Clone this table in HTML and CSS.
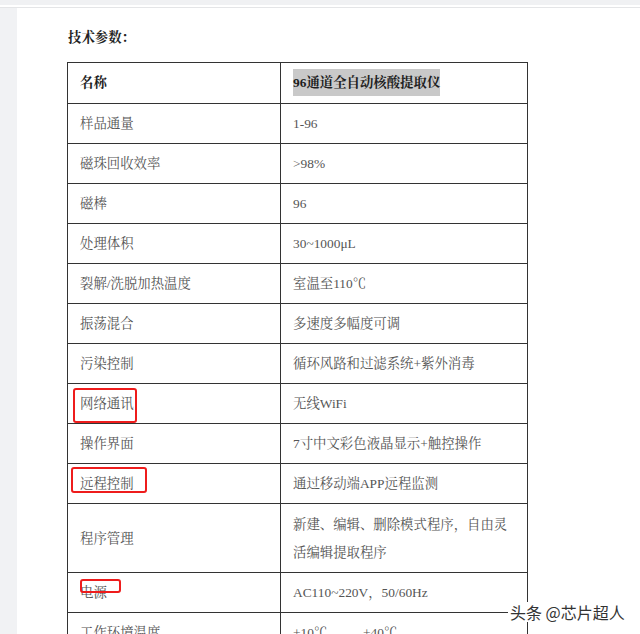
FILE: index.html
```html
<!DOCTYPE html>
<html lang="zh">
  <head>
    <meta charset="UTF-8" />
    <meta name="viewport" content="width=device-width, initial-scale=1.0" />
    <title>技术参数</title>
    <link rel="stylesheet" href="styles.css">
  </head>
  <body>
    <div class="topbar"></div>
    <div class="topgap"></div>
    <div class="workspace">
      <div class="gutter"></div>
      <div class="page">
        <h3 class="doc-title">技术参数：</h3>
        <table class="spec-table">
          <tr class="head">
            <td class="key">名称</td>
            <td class="val"><span class="hl">96通道全自动核酸提取仪</span></td>
          </tr>
          <tr>
            <td class="key">样品通量</td>
            <td class="val">1-96</td>
          </tr>
          <tr>
            <td class="key">磁珠回收效率</td>
            <td class="val">&gt;98%</td>
          </tr>
          <tr>
            <td class="key">磁棒</td>
            <td class="val">96</td>
          </tr>
          <tr>
            <td class="key">处理体积</td>
            <td class="val">30~1000μL</td>
          </tr>
          <tr>
            <td class="key">裂解/洗脱加热温度</td>
            <td class="val">室温至110℃</td>
          </tr>
          <tr>
            <td class="key">振荡混合</td>
            <td class="val">多速度多幅度可调</td>
          </tr>
          <tr>
            <td class="key">污染控制</td>
            <td class="val">循环风路和过滤系统+紫外消毒</td>
          </tr>
          <tr>
            <td class="key"><span class="mark mark-net"></span>网络通讯</td>
            <td class="val">无线WiFi</td>
          </tr>
          <tr>
            <td class="key">操作界面</td>
            <td class="val">7寸中文彩色液晶显示+触控操作</td>
          </tr>
          <tr>
            <td class="key"><span class="mark mark-remote"></span>远程控制</td>
            <td class="val">通过移动端APP远程监测</td>
          </tr>
          <tr class="tall">
            <td class="key">程序管理</td>
            <td class="val">新建、编辑、删除模式程序，自由灵活编辑提取程序</td>
          </tr>
          <tr>
            <td class="key"><span class="mark mark-power"></span>电源</td>
            <td class="val">AC110~220V，50/60Hz</td>
          </tr>
          <tr>
            <td class="key">工作环境温度</td>
            <td class="val">+10℃&nbsp;&nbsp;&nbsp;&nbsp;--&nbsp;&nbsp;&nbsp;&nbsp;+40℃</td>
          </tr>
        </table>
        <div class="watermark">头条 @芯片超人</div>
      </div>
    </div>
  </body>
</html>
```

FILE: styles.css
```css
body {
  margin: 0;
  background-color: #f1f2f4;
  font-family: "Liberation Serif", "Noto Serif CJK SC", "Noto Sans CJK SC", serif;
  overflow: hidden;
  height: 634px;
}
.topbar {
  height: 5px;
  background-color: #f0f1f3;
}
.topgap {
  height: 2px;
  background-color: #fff;
  border-bottom: 1px solid #e4e5e7;
}
.workspace {
  display: flex;
  height: 626px;
}
.gutter {
  width: 17px;
  flex-shrink: 0;
  background-color: #f1f2f4;
}
.page {
  position: relative;
  flex: 1;
  background-color: #fff;
  padding: 20px 0 0 50px;
}
.doc-title {
  margin: 0 0 14px 1px;
  font-size: 13.4px;
  line-height: 20px;
  font-weight: bold;
  color: #222;
}
.spec-table {
  border-collapse: collapse;
  width: 461px;
  font-size: 13.4px;
  color: #555;
}
.spec-table td {
  border: 1px solid #333;
  height: 39px;
  padding: 0 12px;
  vertical-align: middle;
  line-height: 28px;
}
.spec-table td.key {
  position: relative;
  width: 188px;
}
.spec-table tr.head td {
  height: 40px;
  color: #1e1e1e;
  font-weight: bold;
}
.spec-table tr.tall td {
  height: 66px;
  padding-top: 2px;
}
.hl {
  background-color: #c9c9c9;
  padding: 6px 0;
}
.mark {
  position: absolute;
  border: 2px solid #ee1c1c;
  border-radius: 3px;
}
.mark-net {
  left: 5px;
  top: 4px;
  width: 60px;
  height: 31px;
}
.mark-remote {
  left: 3px;
  top: 3px;
  width: 72px;
  height: 22px;
}
.mark-power {
  left: 12px;
  top: 6px;
  width: 37px;
  height: 10px;
}
.watermark {
  position: absolute;
  left: 491px;
  top: 594px;
  font-family: "Noto Sans CJK SC", sans-serif;
  font-size: 16px;
  color: #333;
  background-color: #fff;
  padding: 0 2px;
  line-height: 20px;
}
```
